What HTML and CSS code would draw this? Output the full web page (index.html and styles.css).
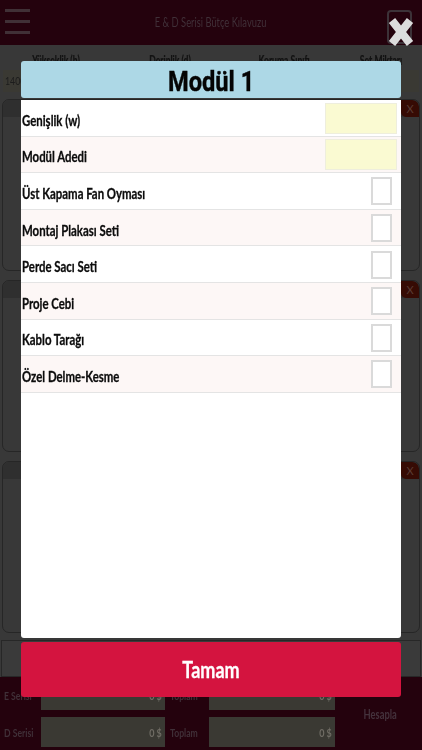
FILE: index.html
```html
<!DOCTYPE html>
<html lang="tr">
<head>
<meta charset="utf-8">
<title>E &amp; D Serisi Bütçe Kılavuzu</title>
<link rel="stylesheet" href="styles.css">
</head>
<body>
<div class="page">
  <header class="topbar">
    <div class="burger"><span></span><span></span><span></span></div>
    <div class="title">E &amp; D Serisi Bütçe Kılavuzu</div>
    <div class="calc"></div>
  </header>
  <div class="cols">
    <span>Yükseklik (h)</span><span>Derinlik (d)</span><span>Koruma Sınıfı</span><span>Set Miktarı</span>
  </div>
  <div class="vals">
    <div class="val"><span>1400</span></div><div class="val"></div><div class="val"></div><div class="val"></div>
  </div>
  <div class="cards">
    <section class="card"><div class="card-head"><span class="card-x">X</span></div></section>
    <section class="card"><div class="card-head"><span class="card-x">X</span></div></section>
    <section class="card"><div class="card-head"><span class="card-x">X</span></div></section>
  </div>
  <div class="addbar"></div>
  <footer class="totals">
    <div class="sums">
      <span class="lbl">E Serisi</span><div class="sum"><span>0 $</span></div><span class="lbl">Toplam</span><div class="sum"><span>0 $</span></div>
      <span class="lbl">D Serisi</span><div class="sum"><span>0 $</span></div><span class="lbl">Toplam</span><div class="sum"><span>0 $</span></div>
    </div>
    <div class="calc-btn"><span>Hesapla</span></div>
  </footer>
</div>

<svg class="close" viewBox="0 0 24 30" aria-hidden="true"><path d="M3 3.5 L21 26.5 M21 3.5 L3 26.5"/></svg>

<div class="modal">
  <h1 class="modal-title"><span>Modül 1</span></h1>
  <div class="modal-body">
    <div class="row"><span class="name">Genişlik (w)</span><div class="field"></div></div>
    <div class="row alt"><span class="name">Modül Adedi</span><div class="field"></div></div>
    <div class="row"><span class="name">Üst Kapama Fan Oyması</span><div class="check"></div></div>
    <div class="row alt"><span class="name">Montaj Plakası Seti</span><div class="check"></div></div>
    <div class="row"><span class="name">Perde Sacı Seti</span><div class="check"></div></div>
    <div class="row alt"><span class="name">Proje Cebi</span><div class="check"></div></div>
    <div class="row"><span class="name">Kablo Tarağı</span><div class="check"></div></div>
    <div class="row alt"><span class="name">Özel Delme-Kesme</span><div class="check"></div></div>
  </div>
  <button class="ok"><span>Tamam</span></button>
</div>
</body>
</html>
```
FILE: styles.css
```css
* { box-sizing: border-box; }
html, body { margin: 0; height: 100%; }
body {
  width: 422px;
  height: 750px;
  overflow: hidden;
  position: relative;
  background: #383838;
  font-family: "Lato", "Open Sans", sans-serif;
  filter: blur(0.35px);
}
.page { height: 750px; display: flex; flex-direction: column; }

.topbar {
  height: 45px;
  background: #24020d;
  display: flex;
  align-items: center;
  justify-content: space-between;
  padding: 0 10px 0 5px;
  flex: none;
}
.burger { width: 25px; height: 25px; display: flex; flex-direction: column; justify-content: space-between; margin-top: -3px; }
.burger span { height: 3px; background: #403036; }
.title { color: #403038; font-size: 13px; margin-left: 4px; margin-top: -1px; transform: scaleX(0.72); }
.calc { width: 25px; height: 34px; border: 2px solid #3c3238; border-radius: 4px; margin-top: 8px; }

.cols {
  height: 25px;
  flex: none;
  display: grid;
  grid-template-columns: 112px 116px 112px 82px;
  text-align: center;
  font-size: 13px;
  font-weight: 700;
  color: #121212;
  align-items: center;
  padding-top: 4px;
}
.cols span { transform: scaleX(0.66); white-space: nowrap; -webkit-text-stroke: 0.2px #121212; }
.vals { height: 22px; flex: none; display: grid; grid-template-columns: repeat(4, 1fr); gap: 4px; padding: 0 3px; }
.val { background: #3a3933; font-size: 11px; color: #1c1c1c; padding: 4px 2px; }
.val span { display: inline-block; transform: scaleX(0.8); transform-origin: left; }

.cards { flex: none; display: flex; flex-direction: column; gap: 9px; padding: 7px 2px 0; }
.card { height: 172px; border: 1px solid #262626; border-radius: 7px; background: #383838; overflow: hidden; }
.card-head { height: 17px; background: #2f2f2f; display: flex; justify-content: flex-end; }
.card-x { width: 18px; background: #360b04; color: #5a3c34; font-size: 11px; text-align: center; line-height: 17px; border-radius: 0 7px 0 5px; }

.addbar { flex: none; height: 37px; margin-top: 7px; margin-left: 1px; margin-right: 1px; border: 1px solid #272727; background: #3a3a3a; }
.totals {
  flex: 1;
  background: #24020d;
  display: flex;
  padding: 0 0 3px 4px;
}
.sums {
  width: 331px;
  display: grid;
  grid-template-columns: 37px 124px 44px 126px;
  grid-template-rows: 30px 30px;
  row-gap: 7px;
  align-content: end;
}
.lbl { font-size: 12px; font-weight: 700; color: #403038; align-self: center; white-space: nowrap; transform: scaleX(0.72); transform-origin: left; }
.sums .lbl:nth-child(3), .sums .lbl:nth-child(7) { padding-left: 7px; }
.sum {
  background: #3a3933;
  color: #6f6c64;
  font-size: 12px;
  font-weight: 700;
  text-align: right;
  padding: 8px 3px 0 0;
}
.sum span { display: inline-block; transform: scaleX(0.75); transform-origin: right; }
.calc-btn { flex: 1; text-align: center; color: #44323c; font-size: 13px; font-weight: 700; align-self: center; padding-top: 4px; padding-left: 4px; }
.calc-btn span { display: inline-block; transform: scaleX(0.72); }

.close {
  position: absolute;
  left: 389px;
  top: 17px;
  width: 24px;
  height: 30px;
  overflow: visible;
}
.close path { fill: none; stroke: #dcdcdc; stroke-width: 8; }

.modal {
  position: absolute;
  left: 21px;
  top: 61px;
  width: 380px;
  height: 636px;
  display: flex;
  flex-direction: column;
}
.modal-title {
  margin: 0;
  height: 37px;
  flex: none;
  background: #add8e6;
  border-radius: 3px;
  color: #050505;
  font: 700 28px/42px "Roboto", "Liberation Sans", sans-serif;
  text-align: center;
}
.modal-title span { display: inline-block; transform: scaleX(0.845); -webkit-text-stroke: 0.4px #050505; }
.modal-body {
  margin-top: 2px;
  height: 538px;
  flex: none;
  background: #fff;
  border-radius: 0 0 3px 3px;
}
.row {
  height: 36.6px;
  display: flex;
  align-items: center;
  justify-content: space-between;
  padding: 4px 9px 0 1px;
  border-bottom: 1px solid #e4e4e4;
  font-size: 15px;
  font-weight: 700;
  color: #0c0c0c;
}
.name { display: inline-block; white-space: nowrap; transform: scaleX(0.76); transform-origin: left; -webkit-text-stroke: 0.3px #0c0c0c; }
.row.alt { background: #fdf7f6; }
.field { width: 72px; height: 31px; background: #fafad2; border: 1px solid #eeeedd; margin-right: -5px; margin-top: -3px; }
.check { width: 21px; height: 28px; background: #fff; border: 2px solid #dadada; margin-top: -3px; }
.ok {
  margin-top: 4px;
  height: 55px;
  flex: none;
  border: 0;
  border-radius: 3px;
  background: #d4143f;
  color: #fff;
  font: 700 22px "Lato", sans-serif;
}
.ok span { display: inline-block; transform: scaleX(0.82); -webkit-text-stroke: 0.3px #fff; }
```
